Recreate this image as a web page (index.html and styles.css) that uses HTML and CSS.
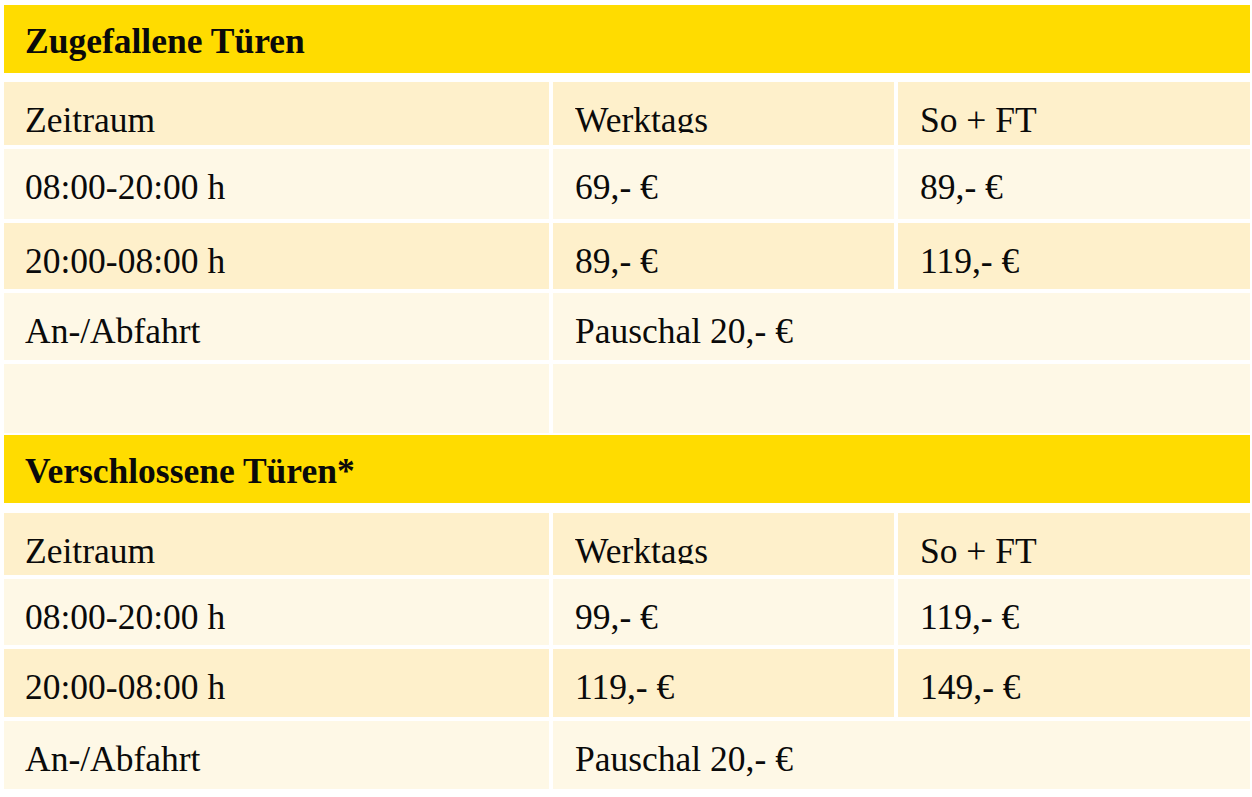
FILE: index.html
```html
<!DOCTYPE html>
<html lang="de">
<head>
<meta charset="utf-8">
<title>Preise</title>
<link rel="stylesheet" href="styles.css">
</head>
<body>
<div class="page">
  <section class="block">
    <div class="title">Zugefallene Türen</div>
    <div class="grid grid-a">
      <div class="cell head"><span class="clip">Zeitraum</span></div>
      <div class="cell head"><span class="clip">Werktags</span></div>
      <div class="cell head"><span class="clip">So + FT</span></div>

      <div class="cell light">08:00-20:00 h</div>
      <div class="cell light">69,- €</div>
      <div class="cell light">89,- €</div>

      <div class="cell dark">20:00-08:00 h</div>
      <div class="cell dark">89,- €</div>
      <div class="cell dark">119,- €</div>

      <div class="cell light">An-/Abfahrt</div>
      <div class="cell light span2">Pauschal 20,- €</div>

      <div class="cell light"></div>
      <div class="cell light span2"></div>
    </div>
  </section>
  <section class="block block-b">
    <div class="title">Verschlossene Türen*</div>
    <div class="grid grid-b">
      <div class="cell head"><span class="clip">Zeitraum</span></div>
      <div class="cell head"><span class="clip">Werktags</span></div>
      <div class="cell head"><span class="clip">So + FT</span></div>

      <div class="cell light">08:00-20:00 h</div>
      <div class="cell light">99,- €</div>
      <div class="cell light">119,- €</div>

      <div class="cell dark">20:00-08:00 h</div>
      <div class="cell dark">119,- €</div>
      <div class="cell dark">149,- €</div>

      <div class="cell light">An-/Abfahrt</div>
      <div class="cell light span2">Pauschal 20,- €</div>
    </div>
  </section>
</div>
</body>
</html>
```
FILE: styles.css
```css
html, body {
  margin: 0;
  padding: 0;
  background: #ffffff;
}

body {
  font-family: "Liberation Serif", "Times New Roman", serif;
  font-size: 35.5px;
  line-height: 40px;
  color: #0a0a0a;
  width: 1252px;
  height: 797px;
  overflow: hidden;
}

.page {
  padding: 5px 2px 0 4px;
}

.title {
  height: 68px;
  box-sizing: border-box;
  background: #ffdc00;
  font-weight: bold;
  padding: 16px 0 0 21px;
  overflow: hidden;
}

.grid {
  display: grid;
  grid-template-columns: 545px 341px 352px;
  column-gap: 4px;
  row-gap: 4px;
  margin-top: 9px;
}

.grid-a {
  grid-template-rows: 63px 70px 66px 67px 69px;
}

.block-b {
  margin-top: 2px;
}

.grid-b {
  margin-top: 10px;
  grid-template-rows: 62px 66px 68px 68px;
}

.cell {
  box-sizing: border-box;
  padding: 18px 0 0 21px;
  overflow: hidden;
  white-space: nowrap;
}

.cell:nth-child(3n+2),
.cell:nth-child(3n) {
  padding-left: 22px;
}

.clip {
  display: block;
  height: 33px;
  overflow: hidden;
}

.head {
  background: #fef0cb;
}

.dark {
  background: #fef0cb;
}

.light {
  background: #fef8e6;
}

.span2 {
  grid-column: 2 / 4;
}
```
